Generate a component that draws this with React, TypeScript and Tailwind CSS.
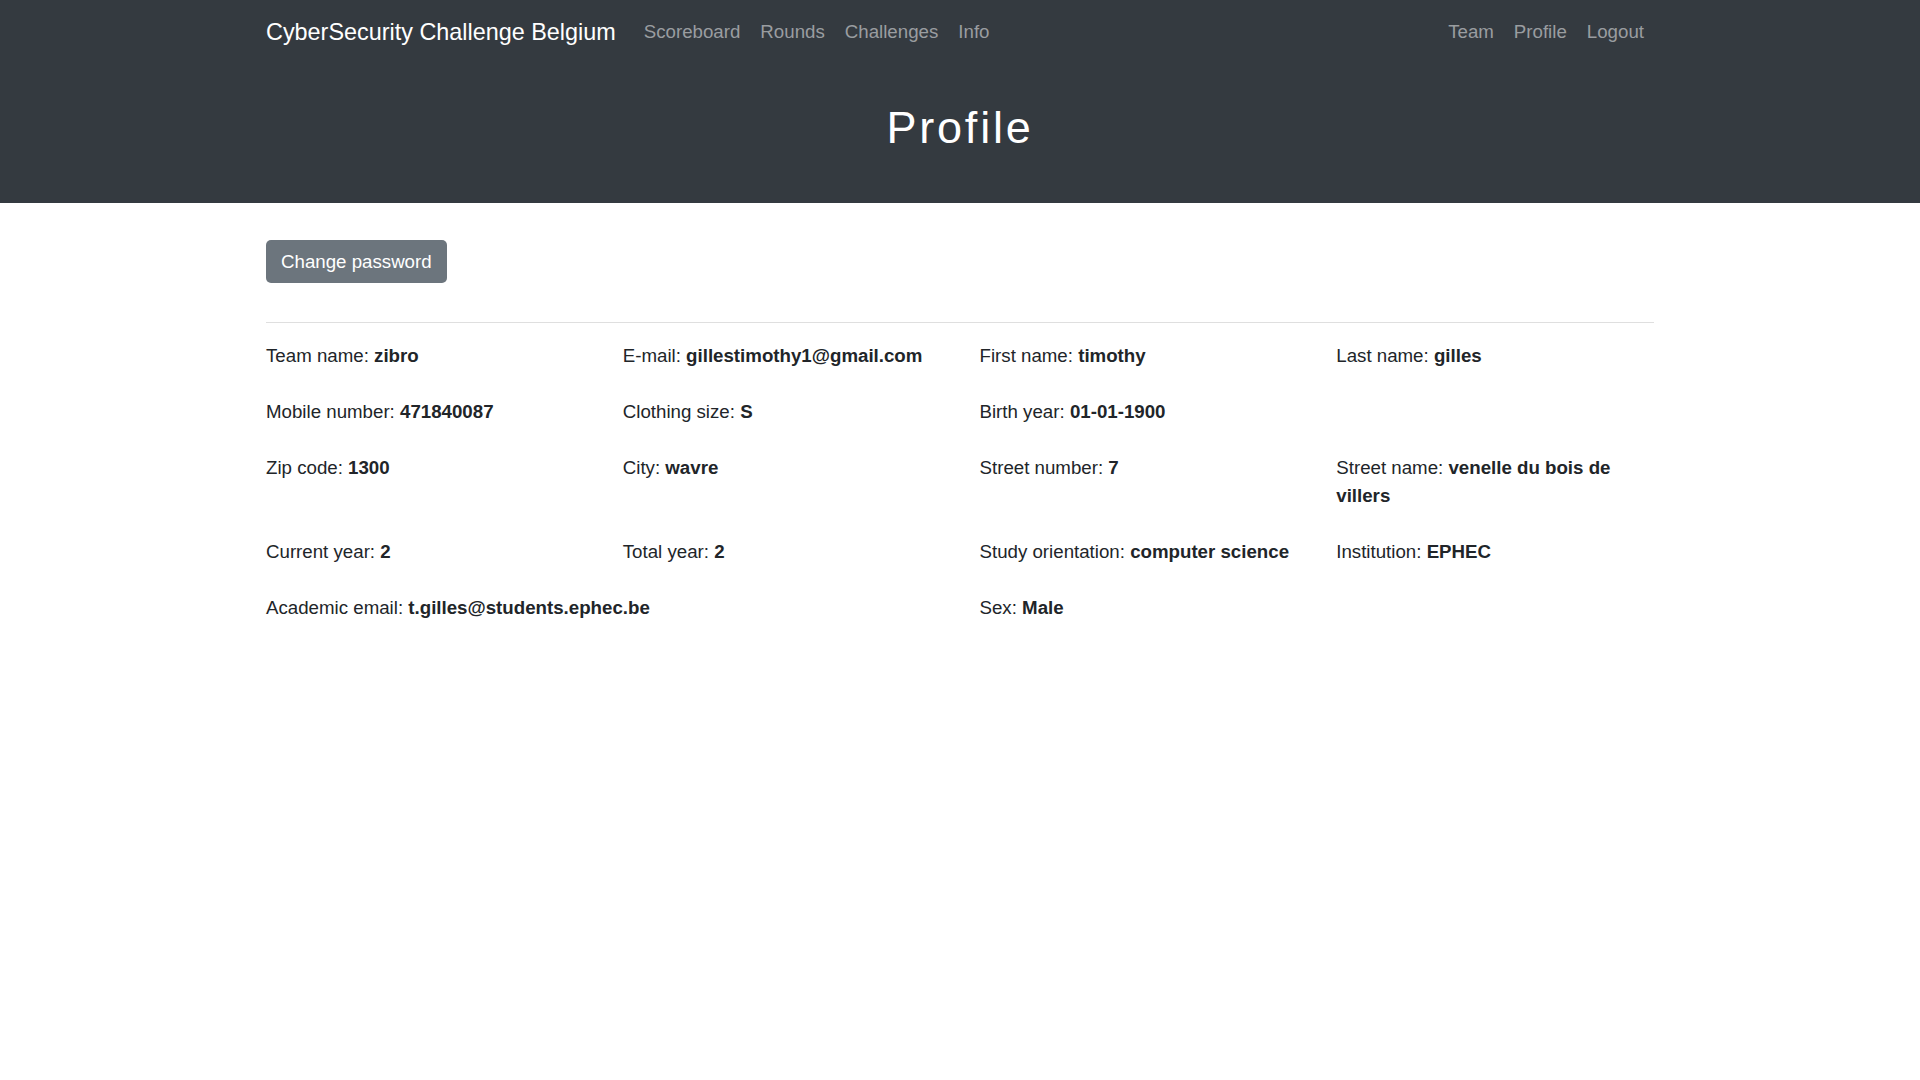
import React from "react";

const fields: { label: string; value: string; span?: number; empty?: boolean }[][] = [
  [
    { label: "Team name", value: "zibro" },
    { label: "E-mail", value: "gillestimothy1@gmail.com" },
    { label: "First name", value: "timothy" },
    { label: "Last name", value: "gilles" },
  ],
  [
    { label: "Mobile number", value: "471840087" },
    { label: "Clothing size", value: "S" },
    { label: "Birth year", value: "01-01-1900" },
    { label: "", value: "", empty: true },
  ],
  [
    { label: "Zip code", value: "1300" },
    { label: "City", value: "wavre" },
    { label: "Street number", value: "7" },
    { label: "Street name", value: "venelle du bois de villers" },
  ],
  [
    { label: "Current year", value: "2" },
    { label: "Total year", value: "2" },
    { label: "Study orientation", value: "computer science" },
    { label: "Institution", value: "EPHEC" },
  ],
  [
    { label: "Academic email", value: "t.gilles@students.ephec.be", span: 2 },
    { label: "Sex", value: "Male", span: 2 },
  ],
];

export default function App() {
  return (
    <div
      className="min-h-screen bg-white text-[#212529]"
      style={{ fontFamily: '"Liberation Sans", Arial, sans-serif' }}
    >
      <div className="bg-[#343a40]">
        <nav className="mx-auto flex h-[64px] w-[1388px] items-center">
          <span className="mr-[18px] text-[23.4px] leading-[32px] text-white">
            CyberSecurity Challenge Belgium
          </span>
          <div className="flex items-center text-[18.7px] leading-[28px] text-[#9a9da0]">
            <span className="px-[10px]">Scoreboard</span>
            <span className="px-[10px]">Rounds</span>
            <span className="px-[10px]">Challenges</span>
            <span className="px-[10px]">Info</span>
          </div>
          <div className="ml-auto flex items-center text-[18.7px] leading-[28px] text-[#9a9da0]">
            <span className="px-[10px]">Team</span>
            <span className="px-[10px]">Profile</span>
            <span className="pl-[10px] pr-[10px]">Logout</span>
          </div>
        </nav>
        <div className="pb-[48px] pt-[37px] text-center">
          <h1 className="text-[45px] leading-[54px] tracking-[2.8px] text-white">Profile</h1>
        </div>
      </div>

      <main className="mx-auto w-[1388px] pt-[37px]">
        <button className="rounded-[5px] bg-[#6c757d] px-[15px] py-[8px] text-[18.7px] leading-[27px] text-white">
          Change password
        </button>
        <div className="mt-[39px] h-px bg-[#dfdfdf]" />
        <div className="grid grid-cols-4 gap-x-[39px] gap-y-[28px] pt-[19px] text-[18.7px] leading-[28px]">
          {fields.flat().map((f, i) =>
            f.empty ? (
              <div key={i} />
            ) : (
              <div key={i} className={f.span === 2 ? "col-span-2" : ""}>
                {f.label}: <b className="font-bold">{f.value}</b>
              </div>
            )
          )}
        </div>
      </main>
    </div>
  );
}
